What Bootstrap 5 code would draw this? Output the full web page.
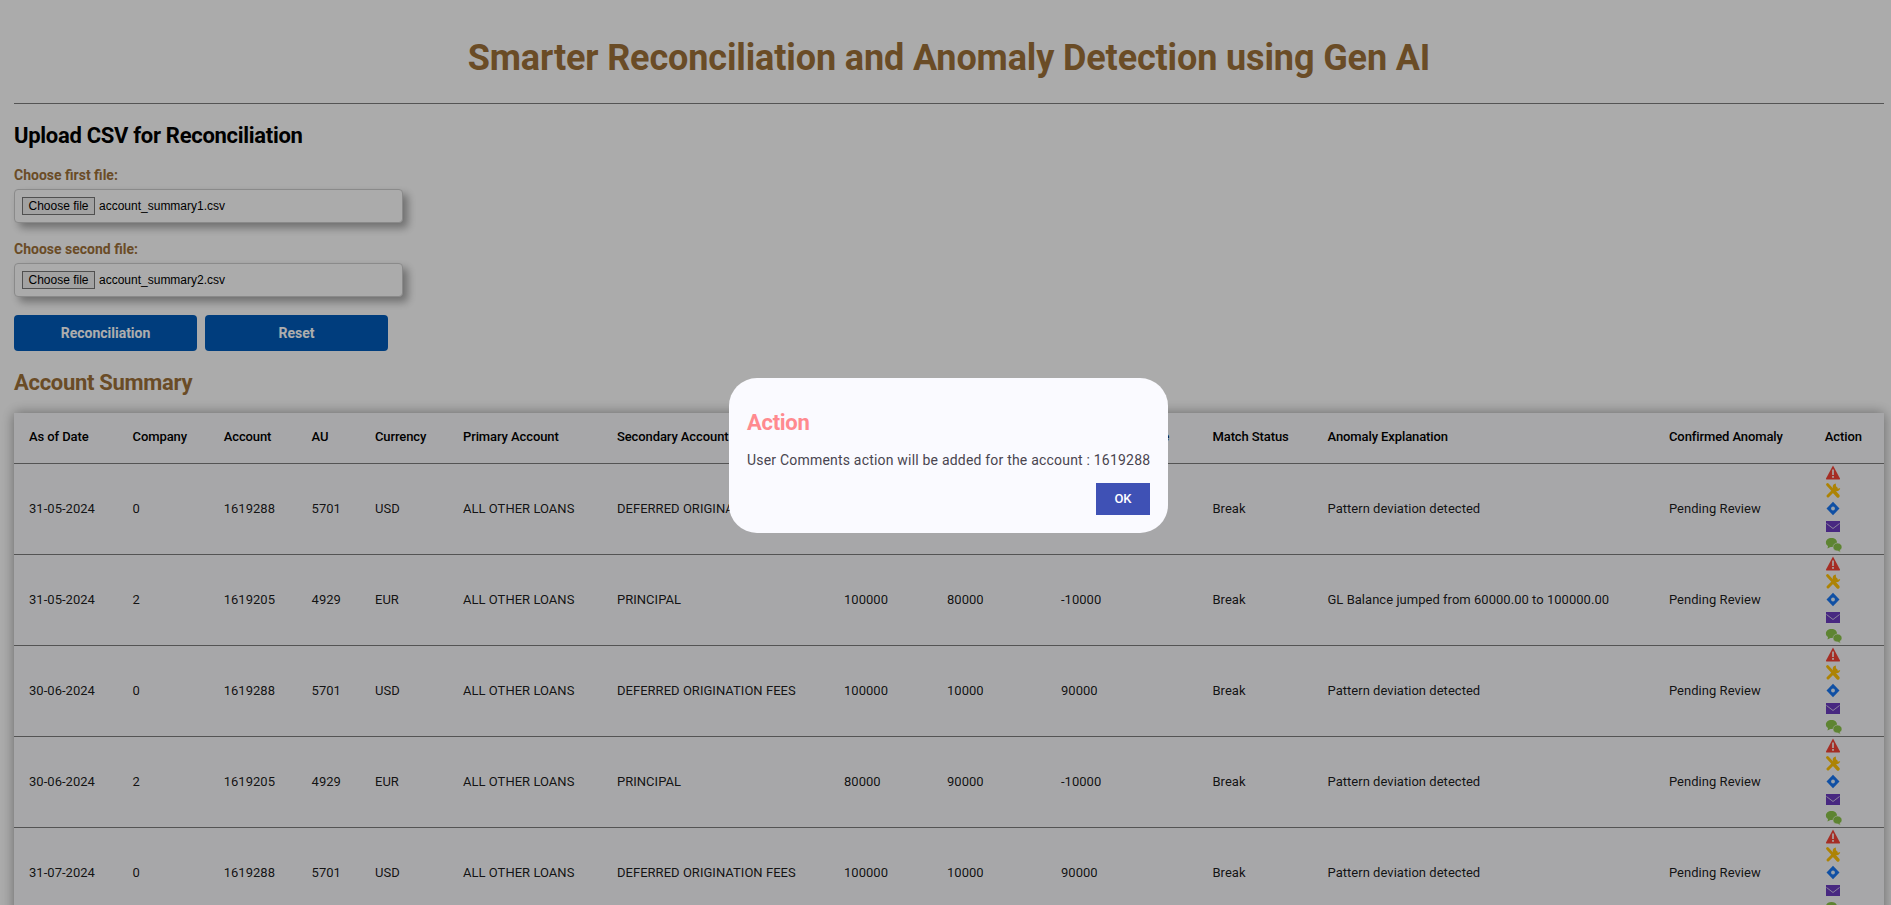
<!DOCTYPE html>
<html lang="en">
<head>
  <meta charset="UTF-8" />
  <title>Smarter Reconciliation and Anomaly Detection using Gen AI</title>
  <meta name="viewport" content="width=device-width, initial-scale=1">
  <link href="https://cdn.jsdelivr.net/npm/bootstrap@5.3.3/dist/css/bootstrap.min.css" rel="stylesheet">
  <style>
    html, body { height: 100%; overflow: hidden; }
    body { background: #fdfdfd; font-family: Roboto, "Liberation Sans", sans-serif; color: #000; }
    .page-wrap { padding: 0 7px 0 14px; }
    .page-title { color: #9c7039; font-size: 36px; font-weight: 700; letter-spacing: -.13px; line-height: 42px; text-align: center; margin: 0; padding-top: 37px; padding-bottom: 24px; }
    .page-rule { margin: 0 0 15px; border-top: 1px solid #7c7c7c; opacity: 1; }
    .upload-title { font-size: 22px; font-weight: 700; letter-spacing: -.3px; line-height: 33px; margin: 0 0 13px; }
    .file-label { color: #9c7039; font-size: 14px; font-weight: 700; line-height: 20px; margin: 0 0 4px; display: block; }
    .file-box { width: 389px; height: 34px; padding: 0 7px; background: #fdfdfd; border: 1px solid #ccc; border-radius: 4px; box-shadow: 5px 5px 8px rgba(0,0,0,.35); font-family: "Liberation Sans", Arial, sans-serif; font-size: 12px; margin-bottom: 16px; }
    .file-btn { width: 73px; height: 18px; padding: 0; background: #efefef; border: 1px solid #767676; border-radius: 0; font: inherit; color: #000; line-height: 16px; }
    .file-group-last { margin-bottom: 18px; }
    .run-btn { width: 183px; height: 36px; padding: 0; background: #005bb9; border: 0; border-radius: 4px; color: #fff; font-size: 14px; font-weight: 700; }
    .run-btn:hover { background: #005bb9; color: #fff; }
    .summary-title { color: #9c7039; font-size: 22px; font-weight: 700; letter-spacing: -.3px; line-height: 33px; margin: 15px 0 14px; }
    .table-shell { width: 1870px; background: #f7f7fa; box-shadow: 0 0 12px rgba(0,0,0,.4); }
    .summary-table { width: 1870px; table-layout: fixed; margin: 0; font-size: 13px; --bs-table-bg: transparent; color: rgba(0,0,0,.9); }
    .summary-table th, .summary-table td { padding: 0 0 0 15px; border-bottom: 1px solid #7c7c7c; vertical-align: middle; white-space: nowrap; font-size: 13px; letter-spacing: .03px; }
    .summary-table th { height: 50px; font-weight: 500; color: #000; letter-spacing: -.1px; padding-bottom: 3px; }
    .summary-table td { height: 91px; }
    .action-icons { display: flex; flex-direction: column; }
    .action-icons svg { display: block; width: 18px; height: 18px; }
    .modal-backdrop.show { background: #000; opacity: .32; }
    .action-modal { padding: 6px 0 0 6px; }
    .action-modal .modal-dialog { max-width: 439px; }
    .action-card { height: 155px; background: #fafaff; border: 0; border-radius: 28px; padding: 30px 18px 18px 18px; }
    .action-title { color: #ff8a8f; font-size: 22px; font-weight: 700; letter-spacing: -.3px; line-height: 30px; margin: 0 0 12px; }
    .action-text { color: #49454f; font-size: 14px; letter-spacing: .2px; line-height: 20px; margin: 0; white-space: nowrap; }
    .action-ok { width: 54px; height: 32px; padding: 0; background: #3f51b5; border: 0; border-radius: 0; color: #fff; font-size: 13px; font-weight: 500; }
    .action-ok:hover { background: #3f51b5; color: #fff; }
  </style>
</head>
<body>
  <svg width="0" height="0" class="d-none">
    <symbol id="ic-warn" viewBox="0 0 18 18">
      <path d="M8 1.5 L15 14.5 Q15.3 15.5 14.3 15.5 L1.7 15.5 Q.7 15.5 1 14.5 Z" fill="#f44336"/>
      <rect x="7.1" y="5.5" width="1.8" height="5.5" fill="#fbe9e7"/><rect x="7.1" y="12" width="1.8" height="1.8" fill="#fbe9e7"/>
    </symbol>
    <symbol id="ic-tools" viewBox="0 0 18 18">
      <path d="M3 14 L11 6" stroke="#ffc107" stroke-width="3" stroke-linecap="round" fill="none"/>
      <path d="M10.8 1.6 A3.8 3.8 0 1 0 15.2 6 L12.9 6.7 L11 4.6 Z" fill="#ffc107"/>
      <path d="M2.5 2.5 L8 8.5" stroke="#ffc107" stroke-width="2.8" stroke-linecap="round" fill="none"/>
      <path d="M8.5 9 L13 14" stroke="#ffc107" stroke-width="3.4" stroke-linecap="round" fill="none"/>
    </symbol>
    <symbol id="ic-diamond" viewBox="0 0 18 18">
      <path d="M8 1.8 L14.5 8.5 L8 15.2 L1.5 8.5 Z" fill="#1976f2"/>
      <circle cx="8" cy="8.5" r="1.9" fill="#e3f0ff"/>
    </symbol>
    <symbol id="ic-mail" viewBox="0 0 18 18">
      <rect x="1" y="3" width="14" height="11" fill="#6a3cbf"/>
      <path d="M1.5 5.5 L8 10.5 L14.5 5.5" stroke="#cfc4e8" stroke-width="1" fill="none"/>
    </symbol>
    <symbol id="ic-chat" viewBox="0 0 18 18">
      <path d="M6.5 2 C10 2 12 4 12 6.5 C12 9.3 9.8 11 6.5 11 L5.5 11 L2.5 12.6 L3 10 C1.5 9.2 .9 8 .9 6.5 C.9 4 3 2 6.5 2 Z" fill="#8bc34a"/>
      <path d="M12.5 7 C15 7 17 8.7 17 11 C17 12.5 16.2 13.6 15 14.2 L15.5 16.5 L13 15 C10 15.2 8 13.6 8 11.2 C8 8.8 10 7 12.5 7 Z" fill="#8bc34a" stroke="#fbfbfb" stroke-width=".6"/>
    </symbol>
  </svg>

  <div class="page-wrap">
    <h1 class="page-title">Smarter Reconciliation and Anomaly Detection using Gen AI</h1>
    <hr class="page-rule">

    <h2 class="upload-title">Upload CSV for Reconciliation</h2>
    <form id="uploadForm">
      <label class="file-label">Choose first file:</label>
      <div class="file-box d-flex align-items-center gap-1">
        <button type="button" class="file-btn">Choose file</button>
        <span>account_summary1.csv</span>
      </div>
      <label class="file-label">Choose second file:</label>
      <div class="file-box file-group-last d-flex align-items-center gap-1">
        <button type="button" class="file-btn">Choose file</button>
        <span>account_summary2.csv</span>
      </div>
      <div class="d-flex run-row gap-2">
        <button type="button" class="btn run-btn">Reconciliation</button>
        <button type="button" class="btn run-btn">Reset</button>
      </div>
    </form>

    <h2 class="summary-title">Account Summary</h2>
    <div class="table-shell">
      <table class="table summary-table">
        <colgroup id="cols"></colgroup>
        <thead>
          <tr>
            <th>As of Date</th><th>Company</th><th>Account</th><th>AU</th><th>Currency</th>
            <th>Primary Account</th><th>Secondary Account</th><th>GL Balance</th><th>iHub Balance</th>
            <th>Balance Difference</th><th>Match Status</th><th>Anomaly Explanation</th>
            <th>Confirmed Anomaly</th><th>Action</th>
          </tr>
        </thead>
        <tbody id="rows"></tbody>
      </table>
    </div>
  </div>

  <div class="modal-backdrop show"></div>
  <div class="modal d-block action-modal" tabindex="-1">
    <div class="modal-dialog modal-dialog-centered">
      <div class="modal-content action-card">
        <h2 class="action-title">Action</h2>
        <p class="action-text">User Comments action will be added for the account : 1619288</p>
        <div class="d-flex justify-content-end mt-auto">
          <button type="button" class="btn action-ok">OK</button>
        </div>
      </div>
    </div>
  </div>

  <script>
    const widths = [103.6, 91.1, 87.9, 63.4, 88, 154, 227, 103, 114, 151.5, 115, 341.5, 155.8, 74.2];
    document.getElementById('cols').innerHTML = widths.map(w => `<col style="width:${w}px">`).join('');

    const deferred = ['1619288', '5701', 'USD', 'ALL OTHER LOANS', 'DEFERRED ORIGINATION FEES'];
    const principal = ['1619205', '4929', 'EUR', 'ALL OTHER LOANS', 'PRINCIPAL'];
    const data = [
      ['31-05-2024', '0', ...deferred, '100000', '10000', '90000', 'Pattern deviation detected'],
      ['31-05-2024', '2', ...principal, '100000', '80000', '-10000', 'GL Balance jumped from 60000.00 to 100000.00'],
      ['30-06-2024', '0', ...deferred, '100000', '10000', '90000', 'Pattern deviation detected'],
      ['30-06-2024', '2', ...principal, '80000', '90000', '-10000', 'Pattern deviation detected'],
      ['31-07-2024', '0', ...deferred, '100000', '10000', '90000', 'Pattern deviation detected']
    ];
    const icons = ['warn', 'tools', 'diamond', 'mail', 'chat']
      .map(n => `<svg><use href="#ic-${n}"></use></svg>`).join('');

    document.getElementById('rows').innerHTML = data.map(r => {
      const note = r.pop();
      const cells = [...r, 'Break', note, 'Pending Review'].map(c => `<td>${c}</td>`).join('');
      return `<tr>${cells}<td><div class="action-icons">${icons}</div></td></tr>`;
    }).join('');
  </script>
  <script src="https://cdn.jsdelivr.net/npm/bootstrap@5.3.3/dist/js/bootstrap.bundle.min.js"></script>
</body>
</html>
